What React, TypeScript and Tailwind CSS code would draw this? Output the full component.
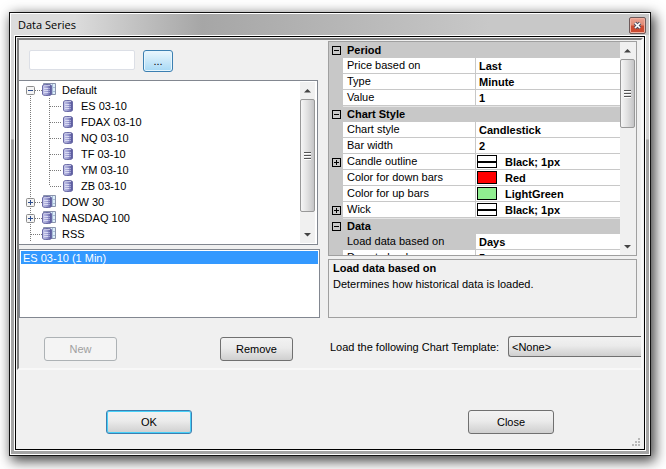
import { Fragment, type ReactNode } from "react";
import clsx from "clsx";

type TreeNode = { label: string; state?: "open" | "closed"; level: number };

const nodes: TreeNode[] = [
  { label: "Default", level: 0, state: "open" },
  { label: "ES 03-10", level: 1 },
  { label: "FDAX 03-10", level: 1 },
  { label: "NQ 03-10", level: 1 },
  { label: "TF 03-10", level: 1 },
  { label: "YM 03-10", level: 1 },
  { label: "ZB 03-10", level: 1 },
  { label: "DOW 30", level: 0, state: "closed" },
  { label: "NASDAQ 100", level: 0, state: "closed" },
  { label: "RSS", level: 0 },
];

type Prop = {
  name: string;
  value: string;
  swatch?: "pen" | "red" | "green";
  expand?: boolean;
  selected?: boolean;
};

const groups: { title: string; props: Prop[] }[] = [
  {
    title: "Period",
    props: [
      { name: "Price based on", value: "Last" },
      { name: "Type", value: "Minute" },
      { name: "Value", value: "1" },
    ],
  },
  {
    title: "Chart Style",
    props: [
      { name: "Chart style", value: "Candlestick" },
      { name: "Bar width", value: "2" },
      { name: "Candle outline", value: "Black; 1px", swatch: "pen", expand: true },
      { name: "Color for down bars", value: "Red", swatch: "red" },
      { name: "Color for up bars", value: "LightGreen", swatch: "green" },
      { name: "Wick", value: "Black; 1px", swatch: "pen", expand: true },
    ],
  },
  {
    title: "Data",
    props: [
      { name: "Load data based on", value: "Days", selected: true },
      { name: "Days to load", value: "5" },
    ],
  },
];

const Database = () => (
  <>
    <path
      d="M0.5 4C0.5 2.8 2.4 2.5 5 2.5S9.5 2.8 9.5 4v8c0 1.2-1.9 1.5-4.5 1.5S0.5 13.2 0.5 12z"
      fill="url(#db)"
      stroke="#6a6aa6"
    />
    <path d="M2 3.5h6" stroke="#c3c4e4" />
    <path d="M2 6.5h4M2 8.5h4M2 10.5h4" stroke="#d9daf2" />
    <path d="M6 6.5h2M6 8.5h2M6 10.5h2" stroke="#a3a4d8" />
  </>
);

const DatabaseIcon = () => (
  <svg width="10" height="16" aria-hidden="true">
    <Database />
  </svg>
);

const GroupIcon = () => (
  <svg width="14" height="16" aria-hidden="true">
    <path d="M1.5 1.5h12v11h-12z" fill="#dceefa" stroke="#8a93ad" />
    <path d="M10.5 2v10M5.5 2v2M10 5.5h3M10 9.5h3" stroke="#a9bdd6" />
    <Database />
  </svg>
);

const TreeLines = ({ node, first, lastChild }: { node: TreeNode; first: boolean; lastChild: boolean }) => (
  <svg width={node.level ? 44 : 23} height="16" className="shrink-0" aria-hidden="true" stroke="#7a7a7a">
    <path d={first ? "M11.5 8v8" : "M11.5 0v16"} strokeDasharray="1 1" />
    {node.level ? (
      <>
        <path d={lastChild ? "M30.5 0v8" : "M30.5 0v16"} strokeDasharray="1 1" />
        <path d="M31 8.5h11" strokeDasharray="1 1" />
      </>
    ) : (
      <path d="M12 8.5h11" strokeDasharray="1 1" />
    )}
    {node.state && (
      <>
        <rect x="7.5" y="4.5" width="8" height="8" rx="1" fill="#f4f4f4" stroke="#8c8c8c" />
        <path d={node.state === "open" ? "M9 8.5h5" : "M9 8.5h5M11.5 6v5"} stroke="#2b4a8b" />
      </>
    )}
  </svg>
);

const Expander = ({ open }: { open: boolean }) => (
  <svg width="9" height="9" className="mx-auto block" aria-hidden="true" stroke="#000">
    <rect x="0.5" y="0.5" width="8" height="8" fill="none" />
    <path d={open ? "M2 4.5h5" : "M2 4.5h5M4.5 2v5"} />
  </svg>
);

const Swatch = ({ kind }: { kind: "pen" | "red" | "green" }) => (
  <span
    className={clsx("flex h-[13px] w-5 items-center border border-black", {
      "bg-white": kind === "pen",
      "bg-[#ff0000]": kind === "red",
      "bg-[#90ee90]": kind === "green",
    })}
  >
    {kind === "pen" && <span className="h-[2px] w-full bg-black" />}
  </span>
);

const Scrollbar = ({ thumb }: { thumb: string }) => (
  <div className="flex w-[15px] shrink-0 flex-col bg-[#f0f0f0]" aria-hidden="true">
    <svg width="15" height="17">
      <path d="M4 10.5L7.5 7L11 10.5z" fill="#444" />
    </svg>
    <div
      className={clsx(
        "flex flex-col items-center justify-center gap-px rounded-[2px] border border-[#989898] bg-linear-to-r from-[#f6f6f6] via-[#e0e0e0] to-[#c4c4c6]",
        thumb
      )}
    >
      <span className="h-[2px] w-[7px] border-b border-white bg-[#555]" />
      <span className="h-[2px] w-[7px] border-b border-white bg-[#555]" />
      <span className="h-[2px] w-[7px] border-b border-white bg-[#555]" />
    </div>
    <svg width="15" height="17" className="mt-auto">
      <path d="M4 7L7.5 10.5L11 7z" fill="#444" />
    </svg>
  </div>
);

const Button = ({ className, disabled, children }: { className?: string; disabled?: boolean; children: ReactNode }) => (
  <button
    type="button"
    disabled={disabled}
    className={clsx(
      "h-6 rounded-[3px] border",
      disabled
        ? "border-[#adb2b5] bg-[#f4f4f4] text-[#a0a0a0]"
        : "bg-linear-to-b from-[#f2f2f2] from-0% via-[#ebebeb] via-45% to-[#cfcfcf]",
      className
    )}
  >
    {children}
  </button>
);

const SymbolTree = () => (
  <div className="mr-[2px] flex border-y border-r border-[#828790] bg-white py-px">
    <ul className="h-[161px] flex-1 overflow-hidden">
      {nodes.map((node, i) => (
        <li key={node.label} className="flex h-4 items-center">
          <TreeLines node={node} first={i === 0} lastChild={nodes[i + 1]?.level === 0} />
          {node.level ? <DatabaseIcon /> : <GroupIcon />}
          <span className={node.level ? "pl-2" : "pl-[6px]"}>{node.label}</span>
        </li>
      ))}
    </ul>
    <Scrollbar thumb="h-[113px]" />
    <div className="w-[2px]" />
  </div>
);

const PropertyGrid = () => (
  <div className="mt-px mr-1 flex h-[215px] overflow-hidden border border-[#a0a0a0]">
    <div className="flex-1 overflow-hidden">
      <table className="w-full table-fixed border-separate border-spacing-0 bg-white">
        <colgroup>
          <col className="w-[14px]" />
          <col className="w-[132px]" />
          <col />
        </colgroup>
        <tbody>
          {groups.map((group, i) => (
            <Fragment key={group.title}>
              <tr className="h-4 bg-[#c8c8c8]">
                <td className="p-0">
                  <Expander open />
                </td>
                <th colSpan={2} className={clsx("p-0 pl-1 text-left", i > 0 && "border-t border-[#e4e4e4]")}>
                  <span className="block h-[15px] leading-[15px]">{group.title}</span>
                </th>
              </tr>
              {group.props.map((prop) => (
                <tr key={prop.name} className="h-4">
                  <td className="bg-[#c8c8c8] p-0">{prop.expand && <Expander open={false} />}</td>
                  <td className={clsx("border-b border-[#c8c8c8] p-0 pl-1 leading-[15px]", prop.selected && "bg-[#c8c8c8]")}>
                    {prop.name}
                  </td>
                  <td className="border-b border-l border-[#c8c8c8] p-0 font-bold">
                    <span className={clsx("flex h-[15px] items-center", prop.swatch ? "gap-2 pl-px" : "pl-[3px]")}>
                      {prop.swatch && <Swatch kind={prop.swatch} />}
                      {prop.value}
                    </span>
                  </td>
                </tr>
              ))}
            </Fragment>
          ))}
        </tbody>
      </table>
    </div>
    <Scrollbar thumb="h-[69px]" />
    <div className="w-px bg-[#f0f0f0]" />
  </div>
);

const App = () => {
  return (
    <div className="overflow-hidden bg-white pt-3 pr-[15px] pb-[13px] pl-[9px] font-['Liberation_Sans',Arial,sans-serif] text-[11px] leading-4 text-black">
      <div className="border border-[#111] shadow-[3px_4px_12px_1px_rgba(0,0,0,0.75)]">
        <div className="border border-white bg-linear-to-b from-[#dcdcdc] from-0% via-[#d0d0d0] via-[125px] to-[#a4a4a4] to-[126px]">
          <header className="flex h-[21px] items-center justify-between bg-linear-to-r from-[#dcdcdc] from-10% via-[#a6a6a6] via-30% to-[#c8c8c8] to-75% pr-[3px] pl-[7px]">
            <h1 className="font-['Open_Sans','Noto_Sans',sans-serif]">Data Series</h1>
            <button
              type="button"
              aria-label="Close window"
              className="mt-[2px] flex size-[17px] items-center justify-center rounded-[2px] border border-[#6e5a5a] bg-linear-to-b from-[#eba495] from-0% via-[#e08a74] via-45% to-[#cc4a30] to-55% ring-1 ring-inset ring-[#f0b0a0]"
            >
              <svg width="9" height="9" aria-hidden="true">
                <path d="M2 2l5 5M7 2l-5 5" stroke="#4a5064" strokeWidth="3.4" />
                <path d="M2 2l5 5M7 2l-5 5" stroke="#fff" strokeWidth="1.7" />
              </svg>
            </button>
          </header>
          <div className="mx-[3px] mb-[3px] border border-white">
            <main className="border border-black bg-[#f0f0f0] p-px pb-0">
              <div className="border-2 border-t-[#808080] border-r-[#f8f8f8] border-b-[#f8f8f8] border-l-[#808080]">
                <div className="flex gap-2">
                  <section className="w-[301px] shrink-0">
                    <div className="flex h-10 gap-2 px-[10px] pt-[10px]">
                      <input
                        type="text"
                        aria-label="Instrument"
                        className="h-5 w-[106px] rounded-[2px] border border-[#dcdfe6] bg-white px-1"
                      />
                      <button
                        type="button"
                        className="h-[22px] w-[30px] rounded-[3px] border border-[#3c7fb1] bg-linear-to-b from-[#eaf6fd] from-0% via-[#c9e8f9] via-50% to-[#a7d9f5] ring-1 ring-inset ring-[#e6f6fd]"
                      >
                        ...
                      </button>
                    </div>
                    <SymbolTree />
                    <ul className="mt-1 h-[69px] border border-[#828790] bg-white p-px">
                      <li className="h-[13px] bg-[#3399ff] pl-[2px] leading-[14px] text-white">ES 03-10 (1 Min)</li>
                    </ul>
                    <div className="flex justify-between pt-[19px] pr-[27px] pb-[7px] pl-[25px]">
                      <Button disabled className="w-[73px]">
                        New
                      </Button>
                      <Button className="w-[73px] border-[#707070]">Remove</Button>
                    </div>
                  </section>
                  <section className="min-w-0 flex-1">
                    <PropertyGrid />
                    <div className="mt-[3px] mr-1 h-[59px] border border-[#a0a0a0] px-1 py-px">
                      <h2 className="leading-[15px] font-bold">Load data based on</h2>
                      <p>Determines how historical data is loaded.</p>
                    </div>
                    <div className="mt-[18px] flex items-center justify-between pl-[2px]">
                      <label htmlFor="template">Load the following Chart Template:</label>
                      <select
                        id="template"
                        className="h-[21px] w-[133px] appearance-none rounded-l-[3px] border border-r-0 border-[#707070] bg-linear-to-b from-[#f2f2f2] from-0% via-[#ebebeb] via-45% to-[#cfcfcf] pl-[3px]"
                      >
                        <option>&lt;None&gt;</option>
                      </select>
                    </div>
                  </section>
                </div>
              </div>
              <footer className="relative flex justify-between px-[89px] pt-10 pb-[15px]">
                <Button className="w-[86px] border-[#3c7fb1] ring-1 ring-inset ring-[#48d0f8]">OK</Button>
                <Button className="w-[86px] border-[#707070]">Close</Button>
                <svg width="9" height="9" className="absolute right-[2px] bottom-[2px]" aria-hidden="true" fill="#b8b8b8">
                  <path d="M6 0h2v2h-2zM3 3h2v2h-2zM6 3h2v2h-2zM0 6h2v2h-2zM3 6h2v2h-2zM6 6h2v2h-2z" />
                </svg>
              </footer>
            </main>
          </div>
        </div>
      </div>
      <svg width="0" height="0" className="absolute" aria-hidden="true">
        <linearGradient id="db">
          <stop offset="0" stopColor="#c9caea" />
          <stop offset="0.5" stopColor="#9b9cd2" />
          <stop offset="1" stopColor="#4d4d92" />
        </linearGradient>
      </svg>
    </div>
  );
};

export default App;
